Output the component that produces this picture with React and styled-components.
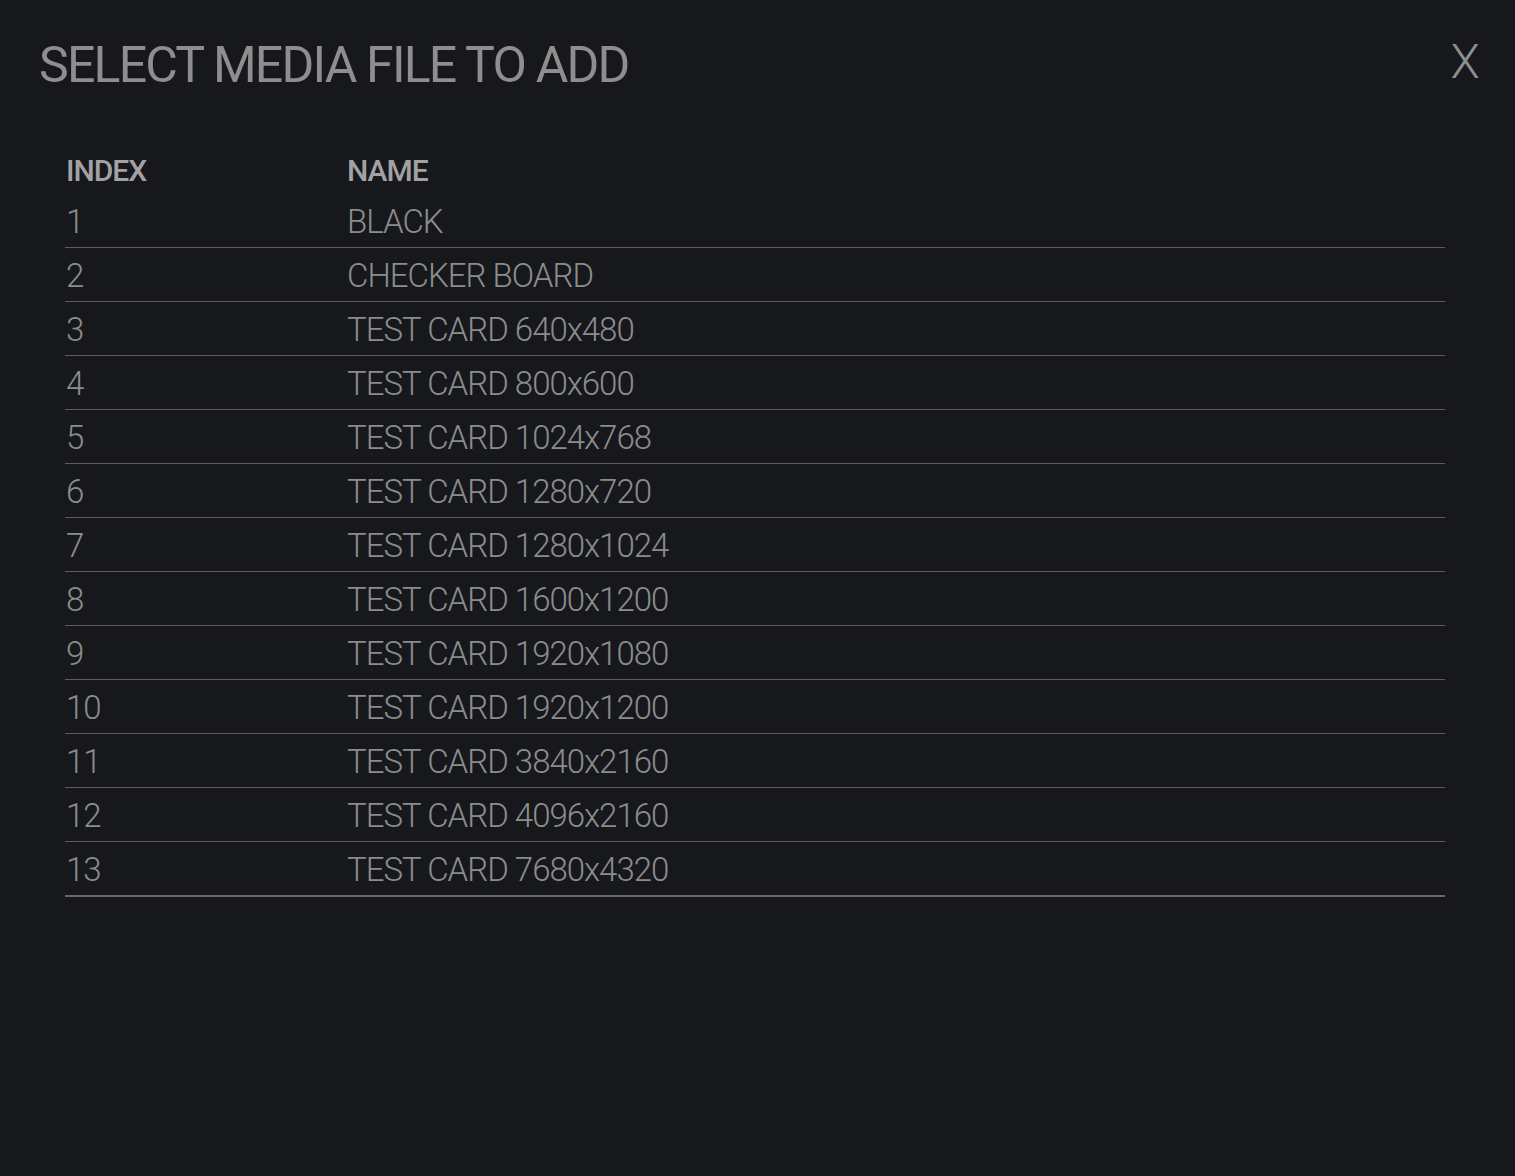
import styled, { createGlobalStyle } from "styled-components";

const files = [
  "BLACK",
  "CHECKER BOARD",
  "TEST CARD 640x480",
  "TEST CARD 800x600",
  "TEST CARD 1024x768",
  "TEST CARD 1280x720",
  "TEST CARD 1280x1024",
  "TEST CARD 1600x1200",
  "TEST CARD 1920x1080",
  "TEST CARD 1920x1200",
  "TEST CARD 3840x2160",
  "TEST CARD 4096x2160",
  "TEST CARD 7680x4320",
];

function App() {
  return (
    <>
      <GlobalStyle />
      <Page>
        <Header>
          <Title>SELECT MEDIA FILE TO ADD</Title>
          <Close>X</Close>
        </Header>
        <Table>
          <HeadRow>
            <IndexCell>INDEX</IndexCell>
            <NameCell>NAME</NameCell>
          </HeadRow>
          {files.map((name, i) => (
            <Row key={name} $last={i === files.length - 1}>
              <IndexCell>{i + 1}</IndexCell>
              <NameCell>{name}</NameCell>
            </Row>
          ))}
        </Table>
      </Page>
    </>
  );
}

const GlobalStyle = createGlobalStyle`
  html, body {
    margin: 0;
    background-color: #16181c;
  }
  body {
    font-family: Roboto, "Liberation Sans", sans-serif;
    color: #8c8c8c;
  }
`;

const Page = styled.div`
  min-height: 1176px;
  background-color: #16181c;
  padding: 36px 35px 0 39px;
  box-sizing: border-box;
`;

const Header = styled.div`
  display: flex;
  justify-content: space-between;
  align-items: flex-start;
`;

const Title = styled.h1`
  margin: 0;
  font-size: 50px;
  font-weight: 400;
  line-height: 58px;
  letter-spacing: -1.8px;
  color: #8e8e8e;
`;

const Close = styled.div`
  font-size: 48px;
  font-weight: 300;
  line-height: 52px;
  color: #8e8e8e;
  cursor: pointer;
`;

const Table = styled.div`
  width: 1380px;
  margin: 52px 0 0 26px;
`;

const Row = styled.div`
  display: flex;
  box-sizing: border-box;
  height: ${(p) => (p.$last ? "55px" : "54px")};
  padding-top: 2px;
  align-items: center;
  border-bottom: ${(p) => (p.$last ? "2px solid #6a6a6a" : "1px solid #5c5c5c")};
  font-size: 33px;
  font-weight: 300;
  letter-spacing: -1px;
  color: #8c8c8c;
`;

const HeadRow = styled.div`
  display: flex;
  box-sizing: border-box;
  height: 48px;
  padding-bottom: 6px;
  align-items: flex-end;
  font-size: 30px;
  font-weight: 500;
  letter-spacing: -1px;
  color: #a2a2a2;
`;

const IndexCell = styled.div`
  width: 282px;
  padding-left: 1px;
  box-sizing: border-box;
`;

const NameCell = styled.div`
  flex: 1;
`;

export default App;
